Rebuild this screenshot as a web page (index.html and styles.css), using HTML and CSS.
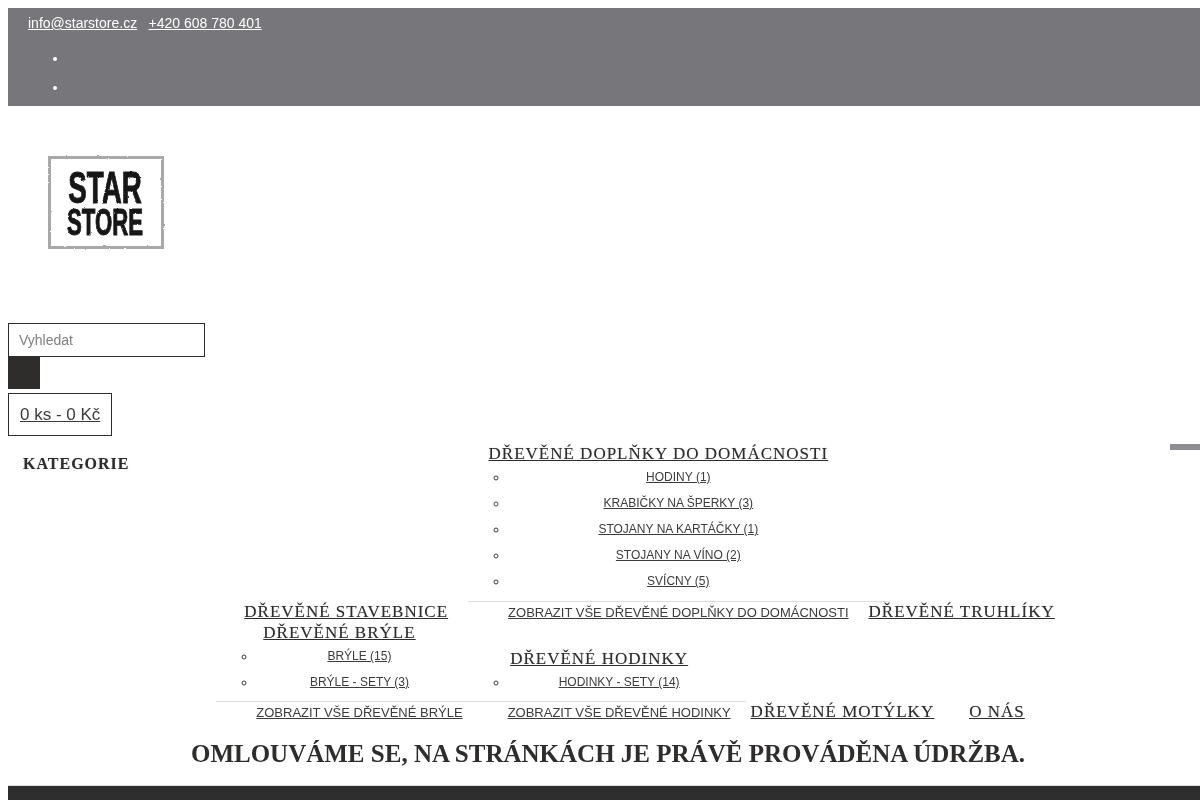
FILE: index.html
```html
<!DOCTYPE html>
<html lang="cs">

<head>
    <meta charset="UTF-8">
    <meta name="viewport" content="width=device-width, initial-scale=1.0">
    <title>Star Store</title>
    <link rel="stylesheet" href="styles.css">
</head>

<body>

    <!-- horni lista -->
    <div class="top-bar">
        <div class="contact">
            <a href="#">info@starstore.cz</a>
            <a href="#">+420 608 780 401</a>
        </div>
        <ul class="top-list">
            <li></li>
            <li></li>
        </ul>
    </div>

    <!-- logo -->
    <div class="logo">
        <svg width="120" height="100" viewBox="0 0 120 100" role="img" aria-label="Star Store">
            <defs>
                <filter id="rough" x="-5%" y="-5%" width="110%" height="110%">
                    <feTurbulence type="fractalNoise" baseFrequency="0.3" numOctaves="2" seed="4" result="noise"></feTurbulence>
                    <feDisplacementMap in="SourceGraphic" in2="noise" scale="2" xChannelSelector="R" yChannelSelector="G"></feDisplacementMap>
                    <feGaussianBlur stdDeviation="0.45"></feGaussianBlur>
                </filter>
            </defs>
            <rect x="2.5" y="3.5" width="113" height="90" fill="#fff" stroke="#a8a8a8" stroke-width="3" filter="url(#rough)"></rect>
            <g filter="url(#rough)">
                <text class="logo-text logo-star" transform="translate(58 49) scale(.63 1)" text-anchor="middle">STAR</text>
                <text class="logo-text logo-store" transform="translate(58 81) scale(.6 1)" text-anchor="middle">STORE</text>
            </g>
        </svg>
    </div>

    <!-- hledani -->
    <form class="search">
        <input type="text" placeholder="Vyhledat">
        <button type="button" aria-label="Hledat"></button>
    </form>

    <div class="cart"><a href="#">0 ks - 0 Kč</a></div>

    <div class="main">
        <div class="categories">KATEGORIE</div>

        <ul class="nav">
            <li><a class="nav-link" href="#">Dřevěné stavebnice</a></li>
            <li>
                <a class="nav-link" href="#">Dřevěné doplňky do domácnosti</a>
                <div class="sub">
                    <ul>
                        <li><a href="#">Hodiny (1)</a></li>
                        <li><a href="#">Krabičky na šperky (3)</a></li>
                        <li><a href="#">Stojany na kartáčky (1)</a></li>
                        <li><a href="#">Stojany na víno (2)</a></li>
                        <li><a href="#">Svícny (5)</a></li>
                    </ul>
                    <div class="rule"></div>
                    <a class="show-all" href="#">Zobrazit vše Dřevěné doplňky do domácnosti</a>
                </div>
            </li>
            <li><a class="nav-link" href="#">Dřevěné truhlíky</a></li>
            <li class="glasses">
                <a class="nav-link" href="#">Dřevěné brýle</a>
                <div class="sub">
                    <ul>
                        <li><a href="#">Brýle (15)</a></li>
                        <li><a href="#">Brýle - sety (3)</a></li>
                    </ul>
                    <div class="rule"></div>
                    <a class="show-all" href="#">Zobrazit vše Dřevěné brýle</a>
                </div>
            </li>
            <li class="watches">
                <a class="nav-link" href="#">Dřevěné hodinky</a>
                <div class="sub">
                    <ul>
                        <li><a href="#">Hodinky - sety (14)</a></li>
                    </ul>
                    <div class="rule"></div>
                    <a class="show-all" href="#">Zobrazit vše Dřevěné hodinky</a>
                </div>
            </li>
            <li><a class="nav-link" href="#">Dřevěné motýlky</a></li>
            <li class="last"><a class="nav-link" href="#">O nás</a></li>
        </ul>

        <div class="toggle"></div>
    </div>

    <h1 class="notice">Omlouváme se, na stránkách je právě prováděna údržba.</h1>

    <div class="footer"></div>

</body>

</html>
```

FILE: styles.css
```css
* {
    box-sizing: border-box;
}

html,
body {
    height: 800px;
    overflow: hidden;
}

body {
    margin: 0;
    padding: 8px 0 0 8px;
    background-color: #fff;
    color: #2e2d2c;
    font-family: "Liberation Sans", Arial, sans-serif;
    font-size: 14px;
    will-change: transform;
}

a {
    color: inherit;
}

.top-bar {
    height: 98px;
    padding: 7px 20px 0;
    background-color: #77767b;
    color: #fff;
}

.contact {
    line-height: 16px;
}

.contact a {
    margin-right: 7.5px;
}

.top-list {
    margin: 19px 0 0;
    padding: 0 0 0 40px;
}

.top-list li {
    height: 29px;
}

.logo {
    height: 217px;
    padding: 48px 0 0 39px;
}

.logo svg {
    display: block;
}

.logo-text {
    font-family: "Liberation Sans", Arial, sans-serif;
    font-weight: bold;
    fill: #161616;
    stroke: #161616;
    stroke-width: 1px;
}

.logo-star {
    font-size: 44px;
}

.logo-store {
    font-size: 37px;
}

.search input {
    display: block;
    width: 197px;
    height: 34px;
    padding: 0 10px;
    border: 1px solid #2e2d2c;
    border-radius: 0;
    outline: none;
    font-family: inherit;
    font-size: 14px;
}

.search input::placeholder {
    color: #808080;
}

.search button {
    display: block;
    width: 32px;
    height: 32px;
    padding: 0;
    border: none;
    background-color: #2e2d2c;
}

.cart {
    display: inline-block;
    height: 43px;
    margin-top: 4px;
    padding: 0 11px;
    border: 1px solid #2e2d2c;
    color: #3d3c3b;
    font-size: 17px;
    line-height: 41px;
}

.main {
    display: flex;
    margin-top: 7px;
}

.categories {
    flex: none;
    width: 208px;
    padding: 10px 0 0 15px;
    font-family: "Liberation Serif", "Times New Roman", serif;
    font-size: 16px;
    font-weight: bold;
    letter-spacing: 1px;
    line-height: 21px;
    text-shadow: 0 0 1px rgba(46, 45, 44, .4);
}

.nav {
    flex: none;
    width: 867px;
    margin: 0;
    padding: 0;
    font-size: 0;
    list-style: none;
    text-align: center;
}

.nav > li {
    display: inline-block;
    font-size: 14px;
}

.nav > .watches {
    margin-left: 5px;
}

/* prazdne misto vpravo posouva radek doleva */
.nav > .last {
    margin-left: -5px;
    margin-right: 38px;
}

.nav-link {
    display: block;
    padding: 0 20px;
    font-family: "Liberation Serif", "Times New Roman", serif;
    font-size: 17px;
    letter-spacing: 1px;
    line-height: 21px;
    text-shadow: 0 0 1px rgba(46, 45, 44, .4);
    text-transform: uppercase;
}

.sub {
    margin-right: -40px;
    padding: 0 40px;
    color: #3d3c3b;
    text-transform: uppercase;
}

.sub ul {
    margin: 0 0 7px;
    padding: 0;
    list-style: circle;
}

.glasses .sub ul,
.watches .sub ul {
    margin-bottom: 6px;
}

.sub ul li {
    height: 26px;
    font-size: 12px;
    line-height: 26px;
}

.rule {
    height: 1px;
    margin: 0 -40px;
    background-color: #ddd;
}

.watches .rule {
    margin-right: -15px;
}

.show-all {
    display: block;
    margin-bottom: -1px;
    font-size: 13px;
    line-height: 21px;
}

.toggle {
    flex: none;
    width: 30px;
    height: 6px;
    margin: 1px 0 0 auto;
    background-color: #8e8d91;
}

.notice {
    margin: 17px 0 0;
    width: 1200px;
    font-family: "Liberation Serif", "Times New Roman", serif;
    font-size: 25px;
    line-height: 30px;
    text-align: center;
    text-transform: uppercase;
    color: #2e2d2c;
}

.footer {
    height: 20px;
    margin-top: 16px;
    border-top: 1px solid #ddd;
    background-color: #2e2e2e;
}
```
